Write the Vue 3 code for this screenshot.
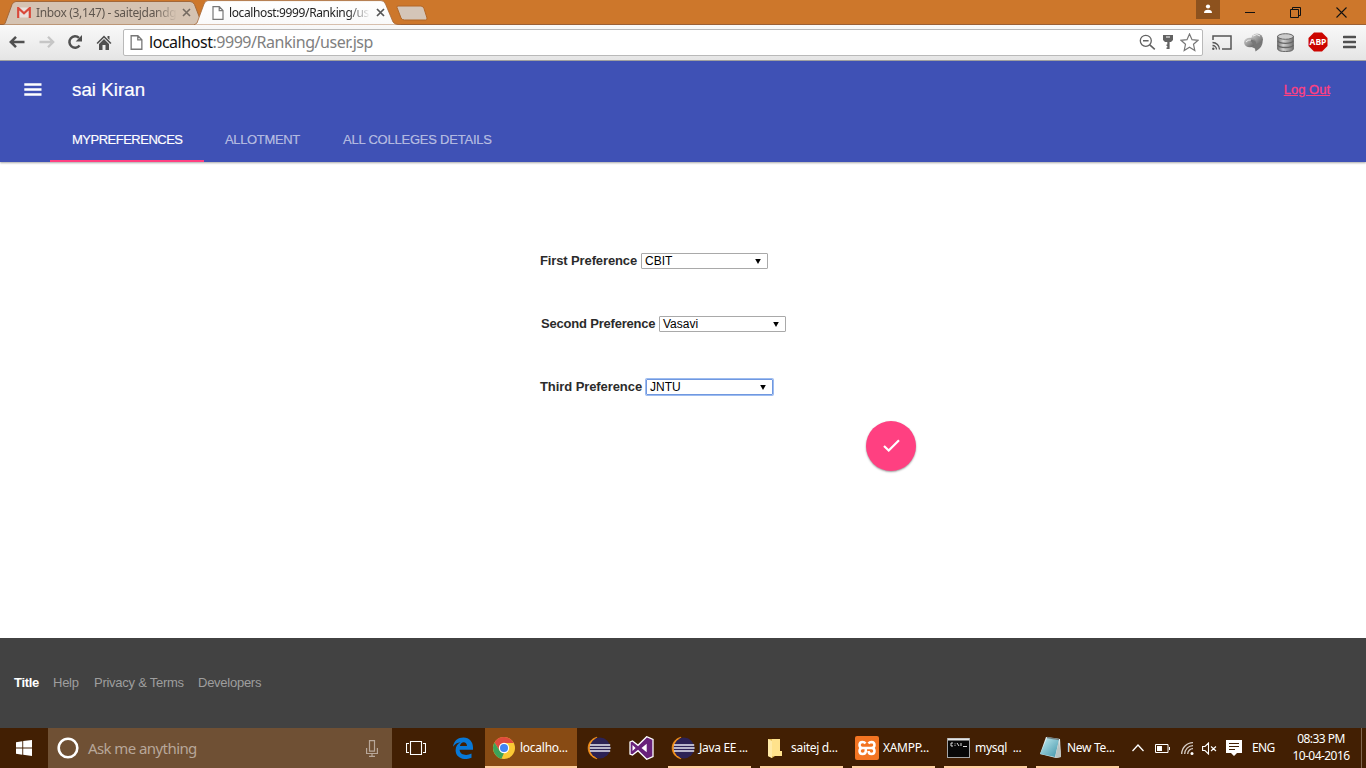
<script setup>
const navTabs = ['MYPREFERENCES', 'ALLOTMENT', 'ALL COLLEGES DETAILS']
const preferences = [
  { key: 'first', label: 'First Preference', value: 'CBIT' },
  { key: 'second', label: 'Second Preference', value: 'Vasavi' },
  { key: 'third', label: 'Third Preference', value: 'JNTU' },
]
const footerLinks = ['Help', 'Privacy & Terms', 'Developers']
const tasks = [
  { icon: 'eclipse', label: 'Java EE ...' },
  { icon: 'folder', label: 'saitej d...' },
  { icon: 'xampp', label: 'XAMPP...' },
  { icon: 'cmd', label: 'mysql\u00a0 ...' },
  { icon: 'note', label: 'New Te...' },
]
</script>

<template>
  <div class="screen">
    <!-- shared gradients and symbols -->
    <svg class="defs" width="0" height="0">
      <defs>
        <linearGradient id="gDisc" x1="0" y1="0" x2="1" y2="1"><stop offset="0" stop-color="#d8d8d8" /><stop offset="1" stop-color="#555" /></linearGradient>
        <linearGradient id="gDb" x1="0" x2="1"><stop offset="0" stop-color="#777" /><stop offset=".35" stop-color="#d2d2d2" /><stop offset="1" stop-color="#777" /></linearGradient>
        <linearGradient id="gNote" x1="0" y1="0" x2="1" y2="1"><stop offset="0" stop-color="#c5eef3" /><stop offset="1" stop-color="#3f93a8" /></linearGradient>
        <linearGradient id="gTab" x1="0" y1="0" x2="0" y2="1"><stop offset="0" stop-color="#fff" /><stop offset="1" stop-color="#f9f9f9" /></linearGradient>
        <symbol id="page" viewBox="0 0 12 14"><path d="M1 .7h6.3L11 4.5v8.8H1zM7.2.7v3.9H11" fill="#fff" stroke="currentColor" stroke-width="1.2" /></symbol>
        <symbol id="eclipse" viewBox="0 0 24 24">
          <path d="M10 1.2C-1.8 4-1.8 20 10 22.8 4 18 4 6 10 1.2Z" fill="#f7941e" stroke="#f7941e" stroke-width=".7" />
          <circle cx="13" cy="12" r="10.4" fill="#2c2255" />
          <path d="M3 9h20.2M2.6 12h21M3 15h20.2" stroke="#e8e7f2" stroke-width="1.7" />
        </symbol>
      </defs>
    </svg>

    <header class="tabstrip">
      <div class="tab idle">
        <svg class="shape" width="202" height="25" viewBox="0 0 202 25"><path d="M0 25 2 23.500 9 4.500Q10.500 1.500 13 1.500H187Q190 1.500 191.500 4.500L199 24 202 25Z" fill="#d5c3b2" stroke="#a3683a" /></svg>
        <svg class="gmail" width="14" height="11" viewBox="0 0 14 11"><path d="M2 .5h10v10H2z" fill="#e9e1dc" /><path d="M1.200 11V1L7 6.300 12.800 1v10" fill="none" stroke="#d9493a" stroke-width="2.200" /></svg>
        <span class="tab-text inbox">Inbox (3,147) - saitejdandg</span>
        <svg class="close" width="9" height="9" viewBox="0 0 9 9"><path d="m1 1 7 7m0-7-7 7" stroke="#746a61" stroke-width="1.600" /></svg>
      </div>
      <div class="tab active">
        <svg class="shape" width="207" height="25" viewBox="0 0 207 25"><path d="M0 25 3 23 10 4Q11.500 .6 14 .6H187Q190 .6 191.500 4L199 22Q200 24.500 207 25Z" fill="url(#gTab)" stroke="#a3683a" stroke-width=".8" /></svg>
        <svg class="page" width="12" height="14"><use href="#page" /></svg>
        <span class="tab-text local">localhost:9999/Ranking/us</span>
        <svg class="close" width="9" height="9" viewBox="0 0 9 9"><path d="m1 1 7 7m0-7-7 7" stroke="#555" stroke-width="1.700" /></svg>
      </div>
      <svg class="new-tab" width="32" height="16" viewBox="0 0 32 16"><path d="M2 1H25Q27 1 28 3.500L31 13Q31.300 15 29.500 15H8.500Q6 15 5 13L1 2.500Q.6 1 2 1Z" fill="#d4c5b8" stroke="#b26626" /></svg>
      <div class="window-buttons">
        <div class="user"><svg width="10" height="10" viewBox="0 0 10 10"><circle cx="5" cy="2.500" r="2.100" fill="#fff" /><path d="M1 9Q1 5.800 5 5.800T9 9Z" fill="#fff" /></svg></div>
        <svg class="min" width="10" height="1"><path d="M0 .5h10" stroke="#111" /></svg>
        <svg class="max" width="11" height="11" viewBox="0 0 11 11"><path d="M.5 2.500h8v8h-8zM2.500 2.500v-2h8v8h-2" fill="none" stroke="#111" /></svg>
        <svg width="11" height="11" viewBox="0 0 11 11"><path d="m.5.5 10 10m0-10-10 10" stroke="#111" stroke-width="1.100" /></svg>
      </div>
    </header>

    <div class="toolbar">
      <svg class="back" width="16" height="14" viewBox="0 0 16 14"><path d="M15.500 7H2M7 1.800 1.800 7 7 12.200" fill="none" stroke="#505050" stroke-width="2.500" /></svg>
      <svg class="fwd" width="16" height="14" viewBox="0 0 16 14"><path d="M.5 7H14M9 1.800 14.200 7 9 12.200" fill="none" stroke="#c6c6c6" stroke-width="2.300" /></svg>
      <svg class="reload" width="16" height="16" viewBox="0 0 16 16"><path d="M12.600 11.500A5.700 5.700 0 1 1 12 3.800" fill="none" stroke="#505050" stroke-width="2.500" /><path d="M15 1v6.500H8.700Z" fill="#505050" /></svg>
      <svg class="home" width="16" height="15" viewBox="0 0 16 15"><path d="M8 .5 15.500 8l-1.200 1.100L8 2.800 1.700 9.100.5 8ZM11.500 1h2v4l-2-2ZM3 9l5-5 5 5v6H9.500v-5h-3v5H3Z" fill="#505050" /></svg>
      <div class="omnibox">
        <svg class="page" width="13" height="15"><use href="#page" /></svg>
        <span class="url"><b>localhost</b>:9999/Ranking/user.jsp</span>
        <svg class="zoom" width="17" height="17" viewBox="0 0 17 17"><circle cx="6.800" cy="6.800" r="5.500" fill="none" stroke="#626262" stroke-width="1.300" /><path d="M4 6.800h5.600M10.800 10.800l5 4.500" stroke="#626262" stroke-width="1.600" /></svg>
        <svg class="key" width="10" height="14" viewBox="0 0 10 14"><path d="M0 0h10v5L8 7H6.600v7H3.500v-1.500h.8V11h-.8V9.500h.8V7H2L0 5Z" fill="#626262" /><path d="M3 2h4" stroke="#fff" /></svg>
        <svg class="star" width="19" height="19" viewBox="0 0 19 19"><path d="m9.500 1 2.500 5.700 6 .6-4.500 4 1.300 6.200-5.300-3.200-5.300 3.200L5.500 11.300 1 7.300l6-.6Z" fill="#fff" stroke="#777" stroke-width="1.200" /></svg>
      </div>
      <svg class="cast" width="20" height="15" viewBox="0 0 20 15"><path d="M1 5V1h18v13h-9" fill="none" stroke="#555" stroke-width="1.500" /><path d="M.5 7.500a7 7 0 0 1 7 7M.5 10.500a4 4 0 0 1 4 4" fill="none" stroke="#555" stroke-width="1.300" /><circle cx="1.300" cy="13.700" r="1.200" fill="#555" /></svg>
      <svg class="idm" width="20" height="19" viewBox="0 0 20 19"><circle cx="13" cy="6.500" r="6" fill="url(#gDisc)" /><ellipse cx="6" cy="9.500" rx="6" ry="4.800" fill="url(#gDisc)" /><path d="M5 7Q11 6 12.500 11l6-2Q19 14 11.500 18.500L11 15.500 7.500 14l2.500-1.500Q8.500 9 5 7Z" fill="#777" /><path d="M9 3q4-3 7 0M2 9q2-2.500 5-2" stroke="#eee" fill="none" /></svg>
      <svg class="db" width="17" height="19" viewBox="0 0 17 19"><path d="M.7 3v13Q1 18.500 8.500 18.500T16.300 16V3Z" fill="url(#gDb)" stroke="#666" /><ellipse cx="8.500" cy="3.500" rx="7.800" ry="2.800" fill="#ccc" stroke="#666" /><path d="M.7 7.800q1 2.500 7.800 2.500t7.800-2.500M.7 12q1 2.500 7.800 2.500t7.800-2.500" fill="none" stroke="#666" stroke-width="1.300" /></svg>
      <div class="abp"><svg width="20" height="20" viewBox="0 0 20 20"><path d="M6 .5h8L19.500 6v8L14 19.500H6L.5 14V6Z" fill="#cc0500" /></svg><span>ABP</span></div>
      <svg class="menu" width="13" height="14" viewBox="0 0 13 14"><path d="M1 2h11M1 7h11M1 12h11" stroke="#505050" stroke-width="2.600" stroke-linecap="round" /></svg>
    </div>

    <section class="app-header">
      <div class="title-row">
        <svg class="burger" width="18" height="13" viewBox="0 0 18 13"><path d="M.3 1.500h17.200M.3 6.500h17.200M.3 11.500h17.200" stroke="#fff" stroke-width="2.400" /></svg>
        <h1>sai Kiran</h1>
        <a class="logout">Log Out</a>
      </div>
      <nav><a v-for="(t, i) in navTabs" :key="t" :class="['nav' + i, { on: i === 0 }]">{{ t }}</a></nav>
    </section>

    <main>
      <div v-for="p in preferences" :key="p.key" class="pref" :class="p.key">
        <label>{{ p.label }}</label>
        <div class="select"><span>{{ p.value }}</span><svg width="6" height="5" viewBox="0 0 6 5"><path d="M.2 0h5.600L3 5Z" /></svg></div>
      </div>
      <button class="fab"><svg width="17" height="13" viewBox="0 0 17 13"><path d="m1 7 4.700 4.500L16 1.200" fill="none" stroke="#fff" stroke-width="2.200" /></svg></button>
    </main>

    <footer><strong>Title</strong><a v-for="(l, i) in footerLinks" :key="l" :class="'link' + i">{{ l }}</a></footer>

    <div class="taskbar">
      <div class="start"><svg width="16" height="16" viewBox="0 0 16 16"><path d="M0 2.300 6.300 1.300v6.200H0ZM7.200 1.100 16 0v7.500H7.200ZM0 8.400h6.300v6.300L0 13.800ZM7.200 8.400H16V16l-8.800-1.200Z" fill="#fff" /></svg></div>
      <div class="search">
        <svg width="22" height="22" viewBox="0 0 22 22"><circle cx="11" cy="11" r="9.300" fill="none" stroke="#fff" stroke-width="2.600" /></svg>
        <span>Ask me anything</span>
        <svg class="mic" width="12" height="17" viewBox="0 0 12 17"><path d="M3.500.6h5v10.500h-5zM.6 8v5.500h10.800V8M6 13.500v3M3 16.400h6" fill="none" stroke="#b8a799" stroke-width="1.200" /></svg>
      </div>
      <svg class="taskview" width="20" height="16" viewBox="0 0 20 16"><path d="M4.500 1.500h11v13h-11zM3 3.500H.5v9H3M17 3.500h2.500v9H17" fill="none" stroke="#fff" stroke-width="1.100" /></svg>
      <svg class="edge" width="20" height="22" viewBox="0 0 20 22"><path d="M0 9.800C1 3.500 5 .5 10.500.5 16.500.5 20 5 20 10.500v2.300H6.600c.3 5.600 7.600 6.300 11.900 3.700v4.300C11 24 2.600 21 2.600 13.300c0-4 2-6.500 5-8C4.500 5.500 1.800 7 0 9.800Zm6.900-.7H14C14 3.800 7.600 3.900 6.900 9.100Z" fill="#0878d7" /></svg>
      <div class="chrome-task">
        <svg width="22" height="22" viewBox="0 0 22 22"><circle cx="11" cy="11" r="11" fill="#fbc935" /><path d="M1.500 5.500A11 11 0 0 1 20.800 6H11L6.500 13.500Z" fill="#df4b3e" /><path d="M1.500 5.500 6.500 13.500 11 16 8.500 21.700A11 11 0 0 1 1.500 5.500Z" fill="#3da35a" /><circle cx="11" cy="11" r="5.200" fill="#fff" /><circle cx="11" cy="11" r="4" fill="#4284f3" /></svg>
        <span>localho...</span>
      </div>
      <svg class="ecl" width="24" height="24"><use href="#eclipse" /></svg>
      <svg class="vs" width="25" height="24" viewBox="0 0 25 24"><path d="m1 6 2.500-1L9 9.300 17.700.7 24 3.500v17l-6.300 2.800L9 14.700 3.500 19 1 18Z" fill="#68217a" stroke="#fff" stroke-width="1.300" /><path d="M3.500 9v6L6.600 12ZM12.500 12l5.200-4.200v8.400Z" fill="#fff" /></svg>
      <div class="tasks">
        <div v-for="t in tasks" :key="t.icon" class="task" :class="t.icon">
          <svg v-if="t.icon === 'eclipse'" width="24" height="24"><use href="#eclipse" /></svg>
          <svg v-else-if="t.icon === 'folder'" width="24" height="24" viewBox="0 0 24 24"><path d="M5 3h7v17l-3 2-4-2Z" fill="#e4bd59" /><path d="M9 3h8v12h2v5H9Z" fill="#ffe28c" /><path d="m5 3 4 2v17l-4-2Z" fill="#ffeaa8" /></svg>
          <svg v-else-if="t.icon === 'xampp'" width="24" height="24" viewBox="0 0 24 24"><rect width="24" height="24" rx="2" fill="#f37422" /><path d="M10.500 7.500Q9.500 6 7.500 6 4.500 6 4.500 9t3 3H16.500q3-.2 3-3t-3-3Q14.500 6 13.500 7.500M7.500 12q-3 0-3 3t3 3q3.300 0 3.300-3V13M16.500 12q3 0 3 3t-3 3q-3 0-3-3" fill="none" stroke="#fff" stroke-width="2.500" /></svg>
          <svg v-else-if="t.icon === 'cmd'" width="24" height="20" viewBox="0 0 24 20"><rect x=".5" y=".5" width="22" height="19" fill="#080808" stroke="#a6a6a6" /><path d="M1 1.500h21" stroke="#e5e5e5" stroke-width="2" /><path d="M6 5H4v3h2M8 5.500v.8M8 7.200V8M10 5l2 3M14 5v3M16 8.500h4" fill="none" stroke="#ddd" /></svg>
          <svg v-else width="24" height="24" viewBox="0 0 24 24"><path d="m7 1 14 2 1 18-5 1L1 18Z" fill="#e7eff0" /><path d="M8 2 20 4 16 21 1 18Z" fill="url(#gNote)" /><path d="m20 4 2 17-6 1Z" fill="#b9c3c1" /><path d="m8 1.500 12 2" stroke="#6f8184" stroke-width="1.600" /></svg>
          <span>{{ t.label }}</span>
        </div>
      </div>
      <div class="tray">
        <svg class="chev" width="12" height="8" viewBox="0 0 12 8"><path d="m.5 7 5.500-6 5.500 6" fill="none" stroke="#fff" stroke-width="1.300" /></svg>
        <svg class="battery" width="15" height="9" viewBox="0 0 15 9"><path d="M.5.5h12.500v8H.5zM14.500 3v3" fill="none" stroke="#fff" /><path d="M2 2h5v5H2z" fill="#fff" /></svg>
        <svg class="wifi" width="13" height="13" viewBox="0 0 13 13"><path d="M.7 12A11.300 11.300 0 0 1 12 .7M3.700 12A8.300 8.300 0 0 1 12 3.700M6.700 12A5.300 5.300 0 0 1 12 6.700" fill="none" stroke="#d8cec7" stroke-width="1.300" /><circle cx="11" cy="11.500" r="1.500" fill="#fff" /></svg>
        <svg class="vol" width="15" height="13" viewBox="0 0 15 13"><path d="M.6 4.500H3L6.500 1v11L3 8.500H.6zM9 4.500l5 4.500m0-4.500L9 9" fill="none" stroke="#fff" stroke-width="1.100" /></svg>
        <svg class="action" width="16" height="16" viewBox="0 0 16 16"><path d="M0 0h16v13h-5l-3 3-3-3H0Z" fill="#fff" /><path d="M3 3.500h10M3 6.500h10M3 9.500h6" stroke="#421f03" /></svg>
        <span class="lang">ENG</span>
        <div class="clock"><span>08:33 PM</span><span>10-04-2016</span></div>
        <i class="peek"></i>
      </div>
    </div>
  </div>
</template>

<style>
html, body { margin: 0; overflow: hidden; }
</style>

<style scoped>
* { box-sizing: border-box; }
svg { display: block; flex: none; }
.defs { position: absolute; }
.screen { width: 1366px; height: 768px; display: flex; flex-direction: column; overflow: hidden; background: #fff; font-family: "Liberation Sans", Arial, sans-serif; white-space: nowrap; }
.tabstrip { height: 25px; flex: none; display: flex; background: #cd772b; font-family: "Noto Sans", sans-serif; border-bottom: 1px solid #9b6035; }
.tab { position: relative; height: 25px; display: flex; align-items: center; flex: none; }
.shape { position: absolute; left: 0; top: 0; }
.tab > :not(.shape) { position: relative; }
.idle { width: 202px; margin-left: 3px; padding-left: 14px; }
.active { width: 207px; margin-left: -11px; padding-left: 18px; }
.tab-text { font-size: 12px; line-height: 18px; -webkit-mask-image: linear-gradient(90deg, #000 84%, transparent); mask-image: linear-gradient(90deg, #000 84%, transparent); }
.inbox { color: #5f564e; width: 141px; margin-left: 5px; letter-spacing: -.34px; }
.local { color: #222; width: 141px; margin-left: 5px; letter-spacing: -.38px; }
.inbox + .close { margin-left: 5px; }
.local + .close { margin-left: 6px; }
.new-tab { margin: 5px 0 0 -5px; }
.window-buttons { margin-left: auto; display: flex; align-items: center; padding-right: 19px; }
.user { width: 24px; height: 19px; align-self: flex-start; background: #8d521e; display: flex; justify-content: center; padding-top: 4px; margin-right: 25px; }
.min { margin-right: 35px; }
.max { margin-right: 35px; }

.toolbar { height: 36px; flex: none; display: flex; align-items: center; background: linear-gradient(#f9f9f9, #e5e5e5); border-bottom: 1px solid #a4a4a4; padding: 0 10px 1px 9px; }
.fwd { margin-left: 14px; }
.reload { margin-left: 12px; }
.home { margin-left: 13px; }
.omnibox { flex: 1; height: 27px; margin-left: 11px; background: #fff; border: 1px solid #b9b9b9; border-radius: 2px; display: flex; align-items: center; padding: 0 3px 0 6px; }
.omnibox .page, .tab .page { color: #777; }
.url { margin-left: 6px; font: 16px/24px "Noto Sans", sans-serif; color: #808080; letter-spacing: -.46px; }
.url b { font-weight: 400; color: #111; }
.zoom { margin-left: auto; }
.key { margin-left: 7px; }
.star { margin-left: 7px; }
.cast { margin-left: 9px; }
.idm { margin-left: 12px; }
.db { margin-left: 13px; }
.abp { margin-left: 14px; position: relative; width: 20px; height: 20px; }
.abp span { position: absolute; inset: 0; text-align: center; color: #fff; font: bold 8.5px/20px "Open Sans", sans-serif; }
.menu { margin-left: 15px; }

.app-header { height: 101px; flex: none; position: relative; background: #3f51b5; color: #fff; box-shadow: 0 1px 2px rgba(0, 0, 0, .35); }
.title-row { height: 58px; display: flex; align-items: center; padding: 0 36px 0 24px; }
.burger { margin-top: -2px; }
h1 { margin: 0 0 0 30px; font-size: 18.7px; font-weight: 400; letter-spacing: .05px; line-height: 20px; -webkit-text-stroke: .2px; }
.logout { margin: -2px 0 0 auto; color: #ff4081; font-size: 13px; text-decoration: underline; -webkit-text-stroke: .3px; }
nav { height: 43px; display: flex; padding-left: 50px; }
nav a { padding: 0 22px; font-size: 13px; line-height: 42px; height: 43px; color: rgba(255, 255, 255, .6); -webkit-text-stroke: .15px; }
nav .nav0 { width: 154px; letter-spacing: -.5px; }
nav .nav1 { width: 117px; padding-left: 21px; letter-spacing: -.35px; }
nav .nav2 { letter-spacing: -.22px; }
nav a.on { color: #fff; border-bottom: 2px solid #ff4081; }

main { height: 476px; flex: none; display: flex; flex-direction: column; padding: 90px 0 0 540px; }
.pref { height: 18px; display: flex; align-items: center; margin-bottom: 45px; font-size: 13px; }
.pref label { font-weight: bold; color: #2b2b2b; flex: none; padding-bottom: 2px; }
.first label { width: 101px; letter-spacing: -.12px; }
.pref.second label { width: 119px; padding-left: 1px; letter-spacing: -.2px; }
.third label { width: 105px; letter-spacing: -.08px; }
.select { width: 127px; height: 16px; border: 1px solid #a9a9a9; border-radius: 1px; display: flex; align-items: center; padding: 0 6px 0 3px; font-size: 12px; line-height: 14px; color: #000; }
.select svg { margin-left: auto; }
.third .select { margin-left: 1px; border-color: #7098e0; box-shadow: 0 0 0 1px #9dbcf0; }
.fab { width: 50px; height: 50px; border: 0; border-radius: 50%; background: #ff4081; margin: -20px 0 0 326px; display: flex; align-items: center; justify-content: center; padding: 0 0 1px 0; box-shadow: 0 1px 2px rgba(0, 0, 0, .4); }

footer { height: 90px; flex: none; background: #424242; display: flex; align-items: center; padding: 0 0 2px 14px; font-size: 13px; color: #9e9e9e; }
footer strong { color: #fff; width: 39px; letter-spacing: -.3px; }
footer a { letter-spacing: -.26px; }
.link0 { width: 41px; }
.link1 { width: 104px; }

.taskbar { height: 40px; flex: none; display: flex; align-items: center; background: #421f03; color: #fff; font: 12px/16px "Noto Sans", sans-serif; }
.start { width: 48px; flex: none; padding-left: 16px; }
.search { width: 344px; flex: none; height: 40px; background: #6f5034; display: flex; align-items: center; padding: 0 14px 0 9px; color: #b8a799; font-size: 15px; }
.search span { margin-left: 9px; letter-spacing: -.58px; }
.mic { margin-left: auto; }
.taskview { margin-left: 14px; }
.edge { margin-left: 27px; }
.chrome-task { width: 92px; flex: none; height: 40px; margin-left: 12px; background: #884b14; border-bottom: 2px solid #ffd0a0; display: flex; align-items: center; padding: 2px 0 0 8px; }
.chrome-task span { margin-left: 5px; letter-spacing: -.25px; }
.ecl { margin-left: 10px; }
.vs { margin-left: 18px; }
.tasks { display: flex; flex: none; gap: 9px; margin-left: 14px; }
.task { width: 83px; height: 40px; border-bottom: 2px solid #ffd0a0; display: flex; align-items: center; padding: 2px 0 0 3px; }
.task span { margin-left: 4px; letter-spacing: -.3px; }
.tray { flex: 1; height: 40px; display: flex; align-items: center; }
.chev { margin-left: 13px; }
.battery { margin-left: 11px; }
.wifi { margin-left: 11px; }
.vol { margin-left: 8px; }
.action { margin-left: 9px; }
.lang { flex: none; margin-left: 10px; letter-spacing: -.6px; width: 24px; }
.clock { width: 64px; flex: none; margin-left: 13px; padding-bottom: 2px; display: flex; flex-direction: column; align-items: center; line-height: 17px; letter-spacing: -.55px; }
.peek { width: 1px; height: 40px; background: #806650; margin-left: auto; margin-right: 4px; }
</style>
